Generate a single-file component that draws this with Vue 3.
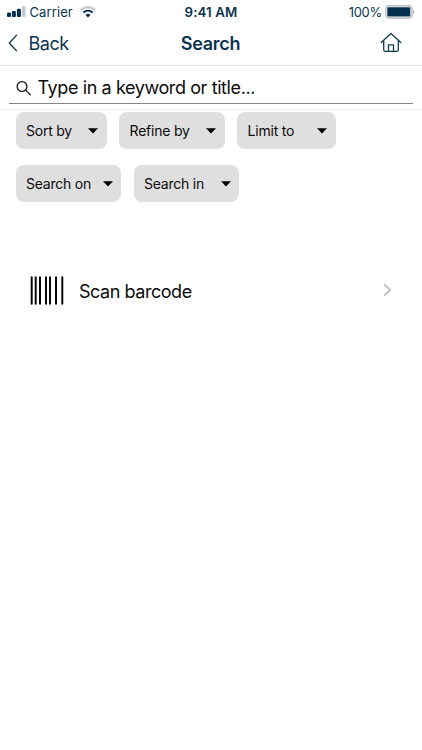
<script setup>
const rows = [
  [
    { label: 'Sort by', size: 'small' },
    { label: 'Refine by', size: 'large' },
    { label: 'Limit to', size: 'medium' },
  ],
  [
    { label: 'Search on', size: 'large' },
    { label: 'Search in', size: 'large' },
  ],
]
</script>

<template>
  <div class="screen">
    <header class="status">
      <div class="status-left">
        <svg class="signal" width="19" height="12" viewBox="0 0 19 12">
          <rect x="0" y="6.6" width="4" height="4.4" rx="1" />
          <rect x="4.9" y="5" width="4" height="6" rx="1" />
          <rect x="9.9" y="2.8" width="4" height="8.2" rx="1" />
          <rect class="dim" x="14.9" y="0.2" width="3.6" height="10.8" rx="1" />
        </svg>
        <span class="carrier">Carrier</span>
        <svg class="wifi" width="16" height="12" viewBox="0 0 16 12">
          <path class="arc dim" d="M.8 4.100C4.700.300 11.300.300 15.200 4.100" />
          <path class="arc" d="M3.300 6.600c2.700-2.400 6.700-2.400 9.400 0" />
          <path class="fill" d="M5.400 8.800c1.600-1.300 3.600-1.300 5.200 0L8 11.400z" />
        </svg>
      </div>
      <span class="time">9:41 AM</span>
      <div class="status-right">
        <span class="percent">100%</span>
        <svg width="30" height="14" viewBox="0 0 30 14">
          <rect class="shell" x="0.8" y="0.8" width="26" height="12.2" rx="3" />
          <rect class="charge" x="2.3" y="2.3" width="23" height="9.2" rx="1" />
          <path class="tip" d="M28 4.700c1.800.6 1.800 3.800 0 4.400z" />
        </svg>
      </div>
    </header>

    <nav class="nav">
      <div class="back">
        <svg width="10" height="18" viewBox="0 0 10 18"><path d="M8.500 1.300L1.300 9l7.200 7.700" /></svg>
        <span>Back</span>
      </div>
      <h1 class="title">Search</h1>
      <div class="home">
        <svg width="22" height="21" viewBox="0 0 22 21">
          <path d="M1.200 10.600L11 1.500l9.800 9.100M3.700 8.500v9.300c0 1 .6 1.600 1.600 1.600h11.400c1 0 1.600-.6 1.600-1.600V8.500M8.500 19v-6.200h5V19" />
        </svg>
      </div>
    </nav>

    <section class="search">
      <div class="field">
        <svg width="16" height="16" viewBox="0 0 16 16">
          <circle cx="6" cy="6.500" r="4.900" /><path d="M9.600 10.100l4.700 4.600" />
        </svg>
        <span>Type in a keyword or title...</span>
      </div>
    </section>

    <section class="filters">
      <div v-for="(row, i) in rows" :key="i" class="filter-row">
        <button v-for="chip in row" :key="chip.label" class="chip" :class="chip.size">
          <span>{{ chip.label }}</span>
          <svg width="10" height="6" viewBox="0 0 10 6"><path d="M0 .300h10L5 5.600z" /></svg>
        </button>
      </div>
    </section>

    <div class="scan">
      <svg class="barcode" width="34" height="30" viewBox="0 0 34 30">
        <path d="M1.700 2.300v26.400M5.700 2.300v26.400M10 2.300v26.400M16 2.300v26.400M20 2.300v26.400M26 2.300v26.400M32.300 2.300v26.400" />
      </svg>
      <span class="scan-label">Scan barcode</span>
      <svg class="chevron" width="9" height="14" viewBox="0 0 9 14"><path d="M1 1.200L7.300 7 1 12.800" /></svg>
    </div>
  </div>
</template>

<style>
body { margin: 0; background: #fff; }
</style>

<style scoped>
.screen { width: 422px; height: 750px; overflow: hidden; background: #fff; color: #0c0c0c; font-family: Inter, "Liberation Sans", sans-serif; }
svg { display: block; flex: none; }
span { white-space: nowrap; }
.status { display: grid; grid-template-columns: 1fr auto 1fr; align-items: center; height: 24px; box-sizing: border-box; padding: 0 7px; color: #0b3450; font-size: 13px; line-height: 24px; }
.status-left { display: flex; align-items: center; }
.signal, .fill, .charge { fill: #06314e; }
.dim { fill: #c3c7cb; }
.carrier { margin-left: 3.5px; width: 43px; letter-spacing: 0.1px; }
.wifi { margin-left: 7px; }
.arc { fill: none; stroke: #06314e; stroke-width: 2; }
.arc.dim { fill: none; stroke: #c3c7cb; }
.time { font-weight: 600; font-size: 13.3px; letter-spacing: 0.1px; }
.status-right { display: flex; align-items: center; justify-content: flex-end; gap: 3px; }
.percent { letter-spacing: -0.3px; }
.shell { fill: none; stroke: #b9bcc3; stroke-width: 1.4; }
.tip { fill: #b0b4bb; }
.nav { display: grid; grid-template-columns: 1fr auto 1fr; align-items: center; height: 42px; box-sizing: border-box; padding: 0 20px 4px 8px; border-bottom: 1px solid #e5e5e5; color: #0b3450; }
.back { display: flex; align-items: center; gap: 10.5px; font-size: 18px; letter-spacing: -0.5px; }
.back span { padding-top: 1px; }
.back svg, .home svg { fill: none; stroke: #123b56; stroke-width: 1.3; stroke-linejoin: round; stroke-linecap: round; }
.title { margin: 2px 0 0 11px; font-size: 18px; line-height: 22px; font-weight: 600; letter-spacing: -0.3px; }
.home { justify-self: end; }
.search { height: 44px; box-sizing: border-box; padding: 7px 9px 0; border-bottom: 1px solid #ececec; }
.field { display: flex; align-items: center; gap: 6px; height: 31px; box-sizing: border-box; padding-left: 6.5px; border-bottom: 1px solid #858585; font-size: 18px; letter-spacing: -0.4px; }
.field span { line-height: 22px; }
.field svg { fill: none; stroke: #161616; stroke-width: 1.3; stroke-linecap: round; }
.filters { display: flex; flex-direction: column; gap: 16px; padding: 2px 15.6px 0; }
.filter-row { display: flex; gap: 12.2px; }
.chip { display: flex; align-items: center; justify-content: space-between; height: 37px; box-sizing: border-box; padding: 0 8.5px 0 10.4px; border: 0; border-radius: 8px; background: #dfdfdf; color: #0c0c0c; font: 14px Inter, sans-serif; letter-spacing: -0.22px; }
.small { width: 91.4px; }
.large { width: 105.8px; }
.medium { width: 98.6px; }
.scan { display: flex; align-items: center; height: 60px; margin-top: 58px; padding: 0 30px; }
.barcode { fill: none; stroke: #080808; stroke-width: 2; stroke-linecap: round; }
.scan-label { margin-left: 15px; padding-top: 2px; font-size: 18px; letter-spacing: -0.46px; }
.chevron { margin-left: auto; fill: none; stroke: #c2c2c6; stroke-width: 2; }
</style>
